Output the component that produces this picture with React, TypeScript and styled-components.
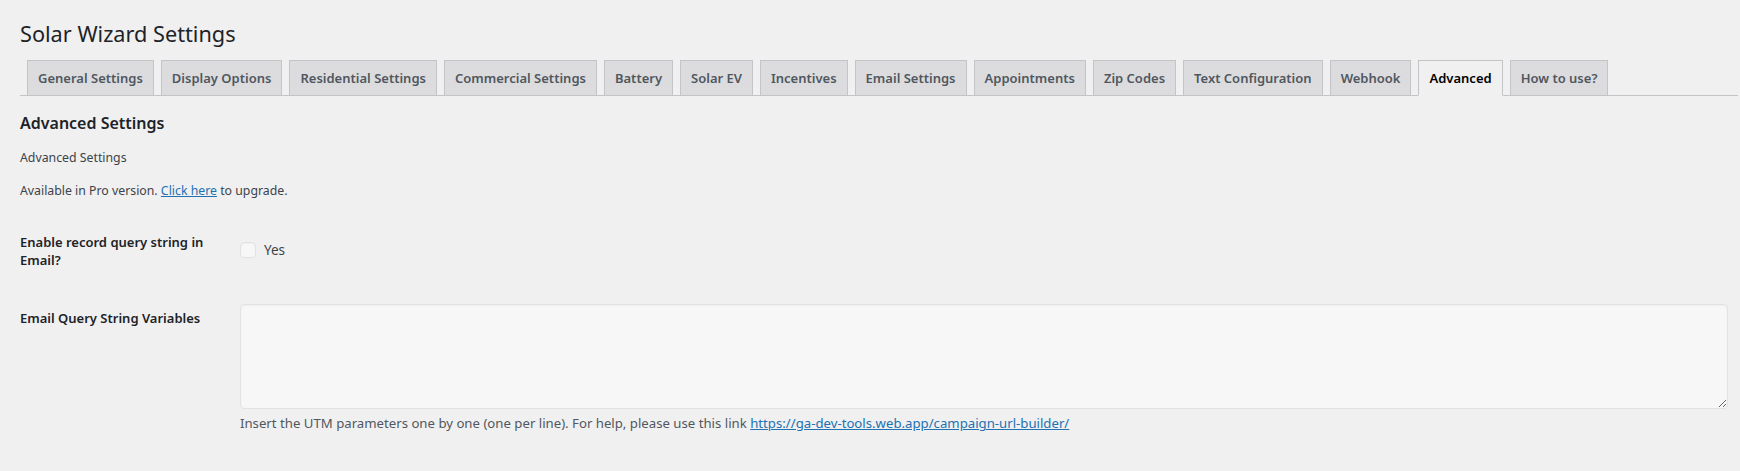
import styled, { createGlobalStyle } from "styled-components";

const GlobalStyle = createGlobalStyle`
  body {
    margin: 0;
    background: #f0f0f1;
    color: #3c434a;
    font-family: "Noto Sans", "Open Sans", sans-serif;
    font-size: 13px;
  }
`;

const Wrap = styled.div`
  padding: 10px 2px 0 20px;
`;

const Title = styled.h1`
  margin: 0;
  padding: 9px 0 4px;
  font-size: 21.7px;
  font-weight: 400;
  line-height: 30px;
  color: #1d2327;
`;

const TabBar = styled.nav`
  display: flex;
  align-items: flex-end;
  margin-top: 7px;
  border-bottom: 1px solid #c3c4c7;
`;

const Tab = styled.a<{ $active?: boolean }>`
  margin-left: 7px;
  padding: 5px 10px;
  border: 1px solid #c3c4c7;
  border-bottom: none;
  font-size: 13px;
  font-weight: 600;
  line-height: 24px;
  white-space: nowrap;
  text-decoration: none;
  background: ${(p) => (p.$active ? "#f0f0f1" : "#dcdcde")};
  color: ${(p) => (p.$active ? "#000" : "#50575e")};
  ${(p) => p.$active && "margin-bottom: -1px; border-bottom: 1px solid #f0f0f1;"}
`;

const SectionTitle = styled.h2`
  margin: 15px 0 13px;
  font-size: 16px;
  font-weight: 600;
  line-height: 24px;
  color: #1d2327;
`;

const Text = styled.p`
  margin: 13px 0;
  font-size: 12.3px;
  line-height: 19.5px;
`;

const Link = styled.a`
  color: #2271b1;
  text-decoration: underline;
`;

const FormTable = styled.table`
  width: 100%;
  border-collapse: collapse;
  margin: 0;
`;

const LabelCell = styled.th`
  width: 200px;
  padding: 20px 10px 20px 0;
  text-align: left;
  vertical-align: top;
  font-size: 13px;
  font-weight: 600;
  line-height: 18.2px;
  color: #1d2327;
`;

const FieldCell = styled.td<{ $top?: number }>`
  padding: ${(p) => p.$top ?? 15}px 10px 15px;
  vertical-align: top;
`;

const CheckLabel = styled.label`
  display: flex;
  align-items: center;
  gap: 8px;
  font-size: 13.5px;
  line-height: 16px;
  color: #3c434a;
`;

const Checkbox = styled.input`
  appearance: none;
  margin: 0;
  width: 16px;
  height: 16px;
  border: 1px solid #e2e2e4;
  border-radius: 4px;
  background: #f7f7f8;
  box-shadow: inset 0 1px 2px rgba(0, 0, 0, 0.04);
`;

const TextArea = styled.textarea`
  display: block;
  box-sizing: border-box;
  width: 100%;
  height: 105px;
  margin: 0;
  padding: 2px 6px;
  border: 1px solid #e2e2e4;
  border-radius: 4px;
  background: #f7f7f8;
  box-shadow: inset 0 1px 2px rgba(0, 0, 0, 0.04);
  font-family: inherit;
  font-size: 14px;
`;

const Description = styled.p`
  margin: 5px 0 5px;
  font-size: 13.2px;
  line-height: 19.5px;
  color: #50575e;
`;

const tabs = [
  "General Settings",
  "Display Options",
  "Residential Settings",
  "Commercial Settings",
  "Battery",
  "Solar EV",
  "Incentives",
  "Email Settings",
  "Appointments",
  "Zip Codes",
  "Text Configuration",
  "Webhook",
  "Advanced",
  "How to use?",
];

const App = () => {
  return (
    <Wrap>
      <GlobalStyle />
      <Title>Solar Wizard Settings</Title>
      <TabBar>
        {tabs.map((tab) => (
          <Tab key={tab} href="#" $active={tab === "Advanced"}>
            {tab}
          </Tab>
        ))}
      </TabBar>
      <SectionTitle>Advanced Settings</SectionTitle>
      <Text>Advanced Settings</Text>
      <Text>
        Available in Pro version. <Link href="#">Click here</Link> to upgrade.
      </Text>
      <FormTable>
        <tbody>
          <tr>
            <LabelCell>Enable record query string in Email?</LabelCell>
            <FieldCell $top={29}>
              <CheckLabel>
                <Checkbox type="checkbox" disabled />
                Yes
              </CheckLabel>
            </FieldCell>
          </tr>
          <tr>
            <LabelCell>Email Query String Variables</LabelCell>
            <FieldCell>
              <TextArea disabled />
              <Description>
                Insert the UTM parameters one by one (one per line). For help, please use this link{" "}
                <Link href="#">https://ga-dev-tools.web.app/campaign-url-builder/</Link>
              </Description>
            </FieldCell>
          </tr>
        </tbody>
      </FormTable>
    </Wrap>
  );
};

export default App;
